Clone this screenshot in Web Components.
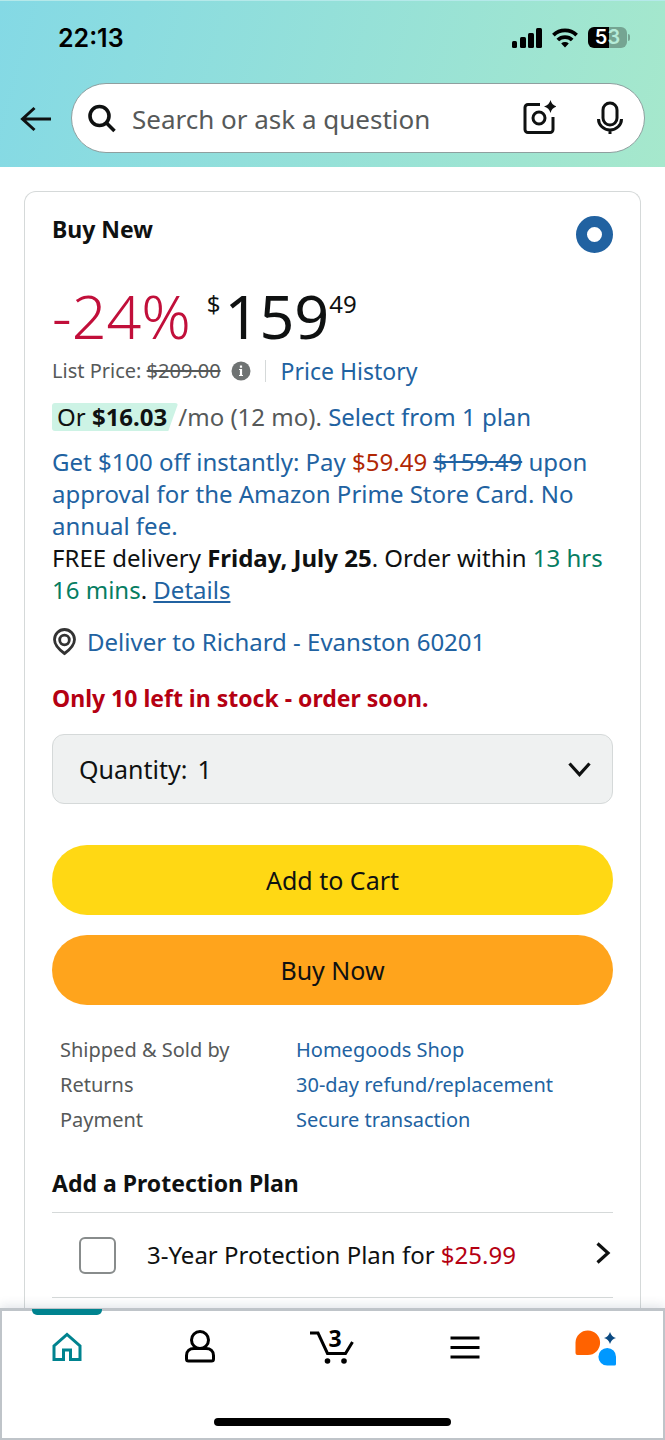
<!DOCTYPE html>
<html lang="en">
<head>
<meta charset="utf-8">
<meta name="viewport" content="width=device-width, initial-scale=1">
<title>Buy New</title>
<style>
  body {
    margin: 0;
    min-height: 100vh;
    display: flex;
    flex-direction: column;
    background: #fff;
    color: #0f1111;
    font: 23px/32px "Noto Sans", "Open Sans", sans-serif;
    --link: #2162a1;
    --muted: #565959;
    --line: #d5d9d9;
    --small: 20px;
    --text: 24px;
    --control: 25px;
  }
  main {
    flex: 1;
    display: flex;
    padding: 24px 24px 0;
  }
</style>
</head>
<body>
  <app-header></app-header>
  <main>
    <buy-box heading="Buy New">
      <price-block discount="-24%" whole="159" cents="49" list="$209.00"></price-block>
      <offer-text></offer-text>
      <stock-info place="Deliver to Richard - Evanston 60201">Only 10 left in stock - order soon.</stock-info>
      <quantity-picker></quantity-picker>
      <buy-actions></buy-actions>
      <seller-info></seller-info>
      <protection-plan price="$25.99">3-Year Protection Plan for</protection-plan>
    </buy-box>
  </main>
  <tab-bar></tab-bar>

<script>
class StatusBar extends HTMLElement {
  constructor() {
    super();
    this.attachShadow({ mode: 'open' });
  }

  connectedCallback() {
    this.shadowRoot.innerHTML = `
      <style>
        :host {
          display: flex;
          align-items: center;
          justify-content: space-between;
          height: 73px;
          padding: 0 35px 0 58px;
          color: #000;
          font-family: Inter, Roboto, sans-serif;
          font-weight: 600;
        }
        time { font-size: 25px; }
        .icons { display: flex; align-items: center; gap: 10px; }
        svg { display: block; }
        .battery { display: flex; align-items: center; gap: 1px; }
        .level {
          width: 39px;
          height: 21px;
          border-radius: 6px;
          background: linear-gradient(90deg, #000 53%, #75a492 53%);
          color: #fff;
          font-size: 20px;
          line-height: 21px;
          text-align: center;
        }
        .level span { color: #b5ecd9; }
        .cap { width: 2px; height: 7px; border-radius: 0 2px 2px 0; background: #75a492; }
      </style>
      <time>22:13</time>
      <div class="icons">
        <svg width="30" height="20" viewBox="0 0 30 20" aria-hidden="true">
          <rect x="0" y="13" width="5" height="7" rx="1.5"/>
          <rect x="8" y="9" width="6" height="11" rx="1.5"/>
          <rect x="16" y="5" width="6" height="15" rx="1.5"/>
          <rect x="24" y="0" width="6" height="20" rx="1.5"/>
        </svg>
        <svg width="26" height="20" viewBox="0 0 26 20" fill="none" stroke="#000" stroke-width="3.8" aria-hidden="true">
          <path d="M1.400 7.200a16.600 16.600 0 0 1 23.200 0"/>
          <path d="M5.800 12a10.300 10.300 0 0 1 14.400 0"/>
          <path d="M13 19.400l-3.800-3.900a5.600 5.600 0 0 1 7.600 0z" fill="#000" stroke="none"/>
        </svg>
        <div class="battery"><div class="level">5<span>3</span></div><div class="cap"></div></div>
      </div>
    `;
  }
}

class SearchBar extends HTMLElement {
  constructor() {
    super();
    this.attachShadow({ mode: 'open' });
  }

  connectedCallback() {
    this.shadowRoot.innerHTML = `
      <style>
        :host { display: flex; align-items: center; gap: 15px; padding: 9px 20px 14px 16px; }
        button { display: block; padding: 0; border: 0; background: none; color: #0f1111; }
        svg { display: block; }
        form {
          box-sizing: border-box;
          flex: 1;
          min-width: 0;
          height: 70px;
          display: flex;
          align-items: center;
          gap: 15px;
          padding: 0 16px 0 15px;
          border: 1px solid #8f9f9f;
          border-radius: 35px;
          background: #fff;
        }
        input {
          flex: 1;
          min-width: 0;
          padding: 2px 0 0;
          border: 0;
          outline: 0;
          background: none;
          font: 26px/36px "Noto Sans", "Open Sans", sans-serif;
        }
        input::placeholder { color: #565959; opacity: 1; }
        .tools { display: flex; align-items: center; gap: 36px; }
      </style>
      <button type="button" aria-label="Back">
        <svg width="40" height="32" viewBox="0 0 40 32" fill="none" stroke="currentColor" stroke-width="3">
          <path d="M35 17H7M18.500 6L6.500 17l12 11"/>
        </svg>
      </button>
      <form role="search">
        <svg width="30" height="30" viewBox="0 0 30 30" fill="none" stroke="#0f1111" stroke-width="3.600" aria-hidden="true">
          <circle cx="12.500" cy="13" r="9.500"/>
          <path d="M19 19.500l8.500 8.500"/>
        </svg>
        <input type="search" placeholder="Search or ask a question" aria-label="Search or ask a question">
        <div class="tools">
          <button type="button" aria-label="Search by camera">
            <svg width="36" height="36" viewBox="0 0 36 36" fill="none" stroke="currentColor" stroke-width="3">
              <path d="M20 4.500H8a3 3 0 0 0-3 3v22a3 3 0 0 0 3 3h22a3 3 0 0 0 3-3V17"/>
              <circle cx="19" cy="18" r="6"/>
              <path d="M30.500 0q1.300 5.200 6.500 6.500-5.200 1.300-6.500 6.500-1.300-5.200-6.500-6.500 5.200-1.300 6.500-6.500z" fill="currentColor" stroke="none"/>
            </svg>
          </button>
          <button type="button" aria-label="Search by voice">
            <svg width="36" height="36" viewBox="0 0 36 36" fill="none" stroke="currentColor" stroke-width="3">
              <rect x="11" y="3" width="14" height="22" rx="7"/>
              <path d="M6.500 19a11.500 11 0 0 0 23 0M18 30v4"/>
            </svg>
          </button>
        </div>
      </form>
    `;
  }
}

class AppHeader extends HTMLElement {
  constructor() {
    super();
    this.attachShadow({ mode: 'open' });
  }

  connectedCallback() {
    this.shadowRoot.innerHTML = `
      <style>
        :host {
          display: block;
          border-top: 1px solid #b5e9ea;
          background: linear-gradient(105deg, #84d9e5, #a6e8cc);
        }
        svg { overflow: visible; }
      </style>
      <status-bar></status-bar>
      <search-bar></search-bar>
    `;
  }
}

class BuyBox extends HTMLElement {
  constructor() {
    super();
    this.attachShadow({ mode: 'open' });
  }

  connectedCallback() {
    const heading = this.getAttribute('heading') || '';

    this.shadowRoot.innerHTML = `
      <style>
        :host {
          display: block;
          flex: 1;
          min-width: 0;
          padding: 24px 27px 10px;
          border: 1px solid var(--line);
          border-bottom: 0;
          border-radius: 12px 12px 0 0;
        }
        label { display: flex; justify-content: space-between; font-weight: 700; line-height: 26px; }
        input {
          appearance: none;
          box-sizing: border-box;
          width: 37px;
          height: 37px;
          margin: 0;
          border: 11px solid var(--link);
          border-radius: 50%;
          background: #fff;
        }
      </style>
      <label>${heading}<input type="radio" name="offer" checked></label>
      <slot></slot>
    `;
  }
}

class PriceBlock extends HTMLElement {
  constructor() {
    super();
    this.attachShadow({ mode: 'open' });
  }

  connectedCallback() {
    const discount = this.getAttribute('discount');
    const whole = this.getAttribute('whole');
    const cents = this.getAttribute('cents');
    const list = this.getAttribute('list');

    this.shadowRoot.innerHTML = `
      <style>
        :host { display: block; margin-top: 33px; }
        .price { display: flex; font-size: 61px; line-height: 60px; }
        .discount { margin-right: 16px; color: #c10f3a; font-weight: 300; }
        .whole { margin-left: 4px; }
        sup { font-size: var(--text); line-height: 36px; vertical-align: top; }
        .list { display: flex; align-items: center; margin-top: 9px; color: var(--muted); }
        .list span { font-size: var(--small); }
        .info { margin: 0 14px 0 10px; padding: 0; border: 0; background: none; }
        .info svg { display: block; }
        a { padding-left: 15px; color: var(--link); text-decoration: none; }
        .rule { width: 1px; height: 22px; background: var(--line); }
      </style>
      <div class="price">
        <span class="discount">${discount}</span>
        <sup>$</sup><span class="whole">${whole}</span><sup>${cents}</sup>
      </div>
      <div class="list">
        <span>List Price: <s>${list}</s></span>
        <button class="info" type="button" aria-label="About the list price">
          <svg width="20" height="20" viewBox="0 0 20 20">
            <circle cx="10" cy="10" r="9.500" fill="#6f7373"/>
            <path d="M10 8v7M10 4.500v2.200" fill="none" stroke="#fff" stroke-width="2.200"/>
            <path d="M8 8.500h2M8 14.500h4" fill="none" stroke="#fff"/>
          </svg>
        </button>
        <i class="rule"></i>
        <a href="#history">Price History</a>
      </div>
    `;
  }
}

class OfferText extends HTMLElement {
  constructor() {
    super();
    this.attachShadow({ mode: 'open' });
  }

  connectedCallback() {
    this.shadowRoot.innerHTML = `
      <style>
        :host { display: block; margin-top: 14px; font-size: var(--text); }
        p { margin: 0; }
        a { color: var(--link); text-decoration: none; }
        .monthly { margin-bottom: 13px; color: var(--muted); }
        .badge {
          display: inline-block;
          padding: 0 11px 0 5px;
          border-radius: 3px;
          background: #cdf3e5;
          clip-path: polygon(0 0, 100% 0, calc(100% - 10px) 100%, 0 100%);
          color: #0f1111;
          line-height: 28px;
        }
        .now { color: #b12704; }
        .time { color: #067d62; }
        .details { text-decoration: underline; }
      </style>
      <p class="monthly"><span class="badge">Or <b>$16.03</b></span>/mo (12 mo). <a href="#plans">Select from 1 plan</a></p>
      <p><a href="#card">Get $100 off instantly: Pay <span class="now">$59.49</span> <s>$159.49</s> upon approval for the Amazon Prime Store Card. No annual fee.</a></p>
      <p>FREE delivery <b>Friday, July 25</b>. Order within <span class="time">13 hrs 16 mins</span>. <a class="details" href="#details">Details</a></p>
    `;
  }
}

class StockInfo extends HTMLElement {
  constructor() {
    super();
    this.attachShadow({ mode: 'open' });
  }

  connectedCallback() {
    const place = this.getAttribute('place') || '';

    this.shadowRoot.innerHTML = `
      <style>
        :host { display: grid; gap: 24px; margin: 20px 0; }
        a {
          display: flex;
          align-items: center;
          gap: 10px;
          color: var(--link);
          font-size: var(--text);
          text-decoration: none;
        }
        p { margin: 0; color: #b50012; font-weight: 700; }
      </style>
      <a href="#address">
        <svg width="25" height="28" viewBox="0 0 25 28" fill="none" stroke="#333" stroke-width="2.800" aria-hidden="true">
          <path d="M12.500 25.500C7 21.500 2.500 17 2.500 11.500a10 10 0 0 1 20 0C22.500 17 18 21.500 12.500 25.500z"/>
          <circle cx="12.500" cy="12" r="4.800"/>
        </svg>
        ${place}
      </a>
      <p><slot></slot></p>
    `;
  }
}

class QuantityPicker extends HTMLElement {
  constructor() {
    super();
    this.attachShadow({ mode: 'open' });
  }

  connectedCallback() {
    this.shadowRoot.innerHTML = `
      <style>
        :host { display: block; }
        .box {
          box-sizing: border-box;
          display: flex;
          align-items: center;
          gap: 10px;
          height: 70px;
          padding: 0 20px 0 26px;
          border: 1px solid var(--line);
          border-radius: 12px;
          background: #eff1f1;
          font-size: var(--control);
        }
        select {
          appearance: none;
          flex: 1;
          min-width: 0;
          padding: 0;
          border: 0;
          background: none;
          color: inherit;
          font: inherit;
        }
      </style>
      <div class="box">
        <label for="qty">Quantity:</label>
        <select id="qty">
          <option>1</option>
          <option>2</option>
          <option>3</option>
        </select>
        <svg width="26" height="20" viewBox="0 0 26 20" fill="none" stroke="#0f1111" stroke-width="3.200" aria-hidden="true">
          <path d="M3.500 4.500l10 11 10-11"/>
        </svg>
      </div>
    `;
  }
}

class BuyActions extends HTMLElement {
  constructor() {
    super();
    this.attachShadow({ mode: 'open' });
  }

  connectedCallback() {
    this.shadowRoot.innerHTML = `
      <style>
        :host { display: grid; gap: 20px; margin-top: 41px; font-size: var(--control); }
        button {
          height: 70px;
          border: 0;
          border-radius: 35px;
          background: #ffd814;
          color: #0f1111;
          font: inherit;
        }
        .now { background: #ffa41c; }
      </style>
      <button type="button">Add to Cart</button>
      <button type="button" class="now">Buy Now</button>
    `;
  }
}

class SellerInfo extends HTMLElement {
  constructor() {
    super();
    this.attachShadow({ mode: 'open' });
  }

  connectedCallback() {
    this.shadowRoot.innerHTML = `
      <style>
        :host { display: block; margin: 27px 0 30px; padding: 0 8px; font-size: var(--small); }
        table { width: 100%; border-collapse: collapse; table-layout: fixed; }
        th, td { height: 35px; padding: 0; text-align: left; font-weight: 400; }
        th { width: 236px; color: var(--muted); }
        a { color: var(--link); text-decoration: none; }
      </style>
      <table>
        <tr><th scope="row">Shipped &amp; Sold by</th><td><a href="#seller">Homegoods Shop</a></td></tr>
        <tr><th scope="row">Returns</th><td><a href="#returns">30-day refund/replacement</a></td></tr>
        <tr><th scope="row">Payment</th><td><a href="#payment">Secure transaction</a></td></tr>
      </table>
    `;
  }
}

class ProtectionPlan extends HTMLElement {
  constructor() {
    super();
    this.attachShadow({ mode: 'open' });
  }

  connectedCallback() {
    const price = this.getAttribute('price') || '';

    this.shadowRoot.innerHTML = `
      <style>
        :host { display: block; }
        h2 { margin: 0 0 13px; font-size: inherit; }
        .row {
          box-sizing: border-box;
          display: flex;
          align-items: center;
          height: 86px;
          padding-left: 27px;
          border: solid var(--line);
          border-width: 1px 0;
        }
        label { flex: 1; display: flex; align-items: center; gap: 31px; font-size: var(--text); }
        input {
          appearance: none;
          box-sizing: border-box;
          width: 37px;
          height: 37px;
          margin: 0;
          border: 2px solid #888c8c;
          border-radius: 6px;
          background: #fff;
        }
        b { color: #b50012; font-weight: 400; }
        button { padding: 0; border: 0; background: none; color: #0f1111; }
        svg { display: block; }
      </style>
      <h2>Add a Protection Plan</h2>
      <div class="row">
        <label><input type="checkbox"><span><slot></slot> <b>${price}</b></span></label>
        <button type="button" aria-label="Plan details">
          <svg width="20" height="26" viewBox="0 0 20 26" fill="none" stroke="currentColor" stroke-width="3.200">
            <path d="M4.500 1.500l10.500 9.500L4.500 20.500"/>
          </svg>
        </button>
      </div>
    `;
  }
}

class TabBar extends HTMLElement {
  constructor() {
    super();
    this.attachShadow({ mode: 'open' });
  }

  connectedCallback() {
    this.shadowRoot.innerHTML = `
      <style>
        :host {
          box-sizing: border-box;
          display: flex;
          flex-direction: column;
          justify-content: space-between;
          height: 132px;
          padding-bottom: 14px;
          border-top: 1px solid #bfc4c9;
          background: #fff;
          box-shadow: 0 -2px 10px rgba(60, 80, 110, 0.16), inset 0 0 0 2px #bfc4c9;
        }
        nav { display: grid; grid-template-columns: repeat(5, 1fr); }
        a {
          display: flex;
          flex-direction: column;
          align-items: center;
          gap: 8px;
          color: #000;
        }
        a::before { content: ""; width: 70px; height: 6px; border-radius: 0 0 5px 5px; }
        a.on { color: #00838f; }
        a.on::before { background: #00838f; }
        svg { display: block; overflow: visible; }
        text { font: 700 23px "Noto Sans", "Open Sans", sans-serif; }
        .handle { align-self: center; width: 237px; height: 8px; border-radius: 4px; background: #000; }
      </style>
      <nav>
        <a class="on" href="#home" aria-label="Home">
          <svg width="48" height="48" viewBox="0 0 48 48" fill="none" stroke="currentColor" stroke-width="3">
            <path d="M11 36.500V23L24 11.500 37 23v13.500h-9.500V27h-7v9.500z"/>
          </svg>
        </a>
        <a href="#account" aria-label="Account">
          <svg width="48" height="48" viewBox="0 0 48 48" fill="none" stroke="currentColor" stroke-width="3">
            <circle cx="24" cy="17" r="8.500"/>
            <path d="M18 25.500h12c4.500 0 7.500 2.500 7.500 7v3.500a2 2 0 0 1-2 2h-23a2 2 0 0 1-2-2v-3.500c0-4.500 3-7 7.500-7z"/>
          </svg>
        </a>
        <a href="#cart" aria-label="Cart, 3 items">
          <svg width="48" height="48" viewBox="0 0 48 48" fill="none" stroke="currentColor" stroke-width="3">
            <path d="M1 10h8l9.500 20.500h18L43.500 19"/>
            <circle cx="18.500" cy="38" r="2.800" fill="currentColor" stroke="none"/>
            <circle cx="35" cy="38" r="2.800" fill="currentColor" stroke="none"/>
            <text x="26" y="24" text-anchor="middle" fill="currentColor" stroke="none">3</text>
          </svg>
        </a>
        <a href="#menu" aria-label="Menu">
          <svg width="48" height="48" viewBox="0 0 48 48" fill="none" stroke="currentColor" stroke-width="3">
            <path d="M8.500 15h29M8.500 24.500h29M8.500 34h29"/>
          </svg>
        </a>
        <a href="#assistant" aria-label="Shopping assistant">
          <svg width="48" height="48" viewBox="0 0 48 48">
            <path d="M2.500 32a2 2 0 0 1-2-2V19.500A12.300 12.300 0 1 1 12.800 32z" fill="#ff6200"/>
            <path d="M39.500 42.500a1.500 1.500 0 0 0 1.500-1.500V33.800A8.800 8.800 0 1 0 32.200 42.500z" fill="#0098ff"/>
            <path d="M35 9q1.500 4.800 6 6-4.500 1.200-6 6-1.500-4.800-6-6 4.500-1.200 6-6z" fill="#0b4a82"/>
          </svg>
        </a>
      </nav>
      <div class="handle"></div>
    `;
  }
}

customElements.define('status-bar', StatusBar);
customElements.define('search-bar', SearchBar);
customElements.define('app-header', AppHeader);
customElements.define('buy-box', BuyBox);
customElements.define('price-block', PriceBlock);
customElements.define('offer-text', OfferText);
customElements.define('stock-info', StockInfo);
customElements.define('quantity-picker', QuantityPicker);
customElements.define('buy-actions', BuyActions);
customElements.define('seller-info', SellerInfo);
customElements.define('protection-plan', ProtectionPlan);
customElements.define('tab-bar', TabBar);
</script>
</body>
</html>
